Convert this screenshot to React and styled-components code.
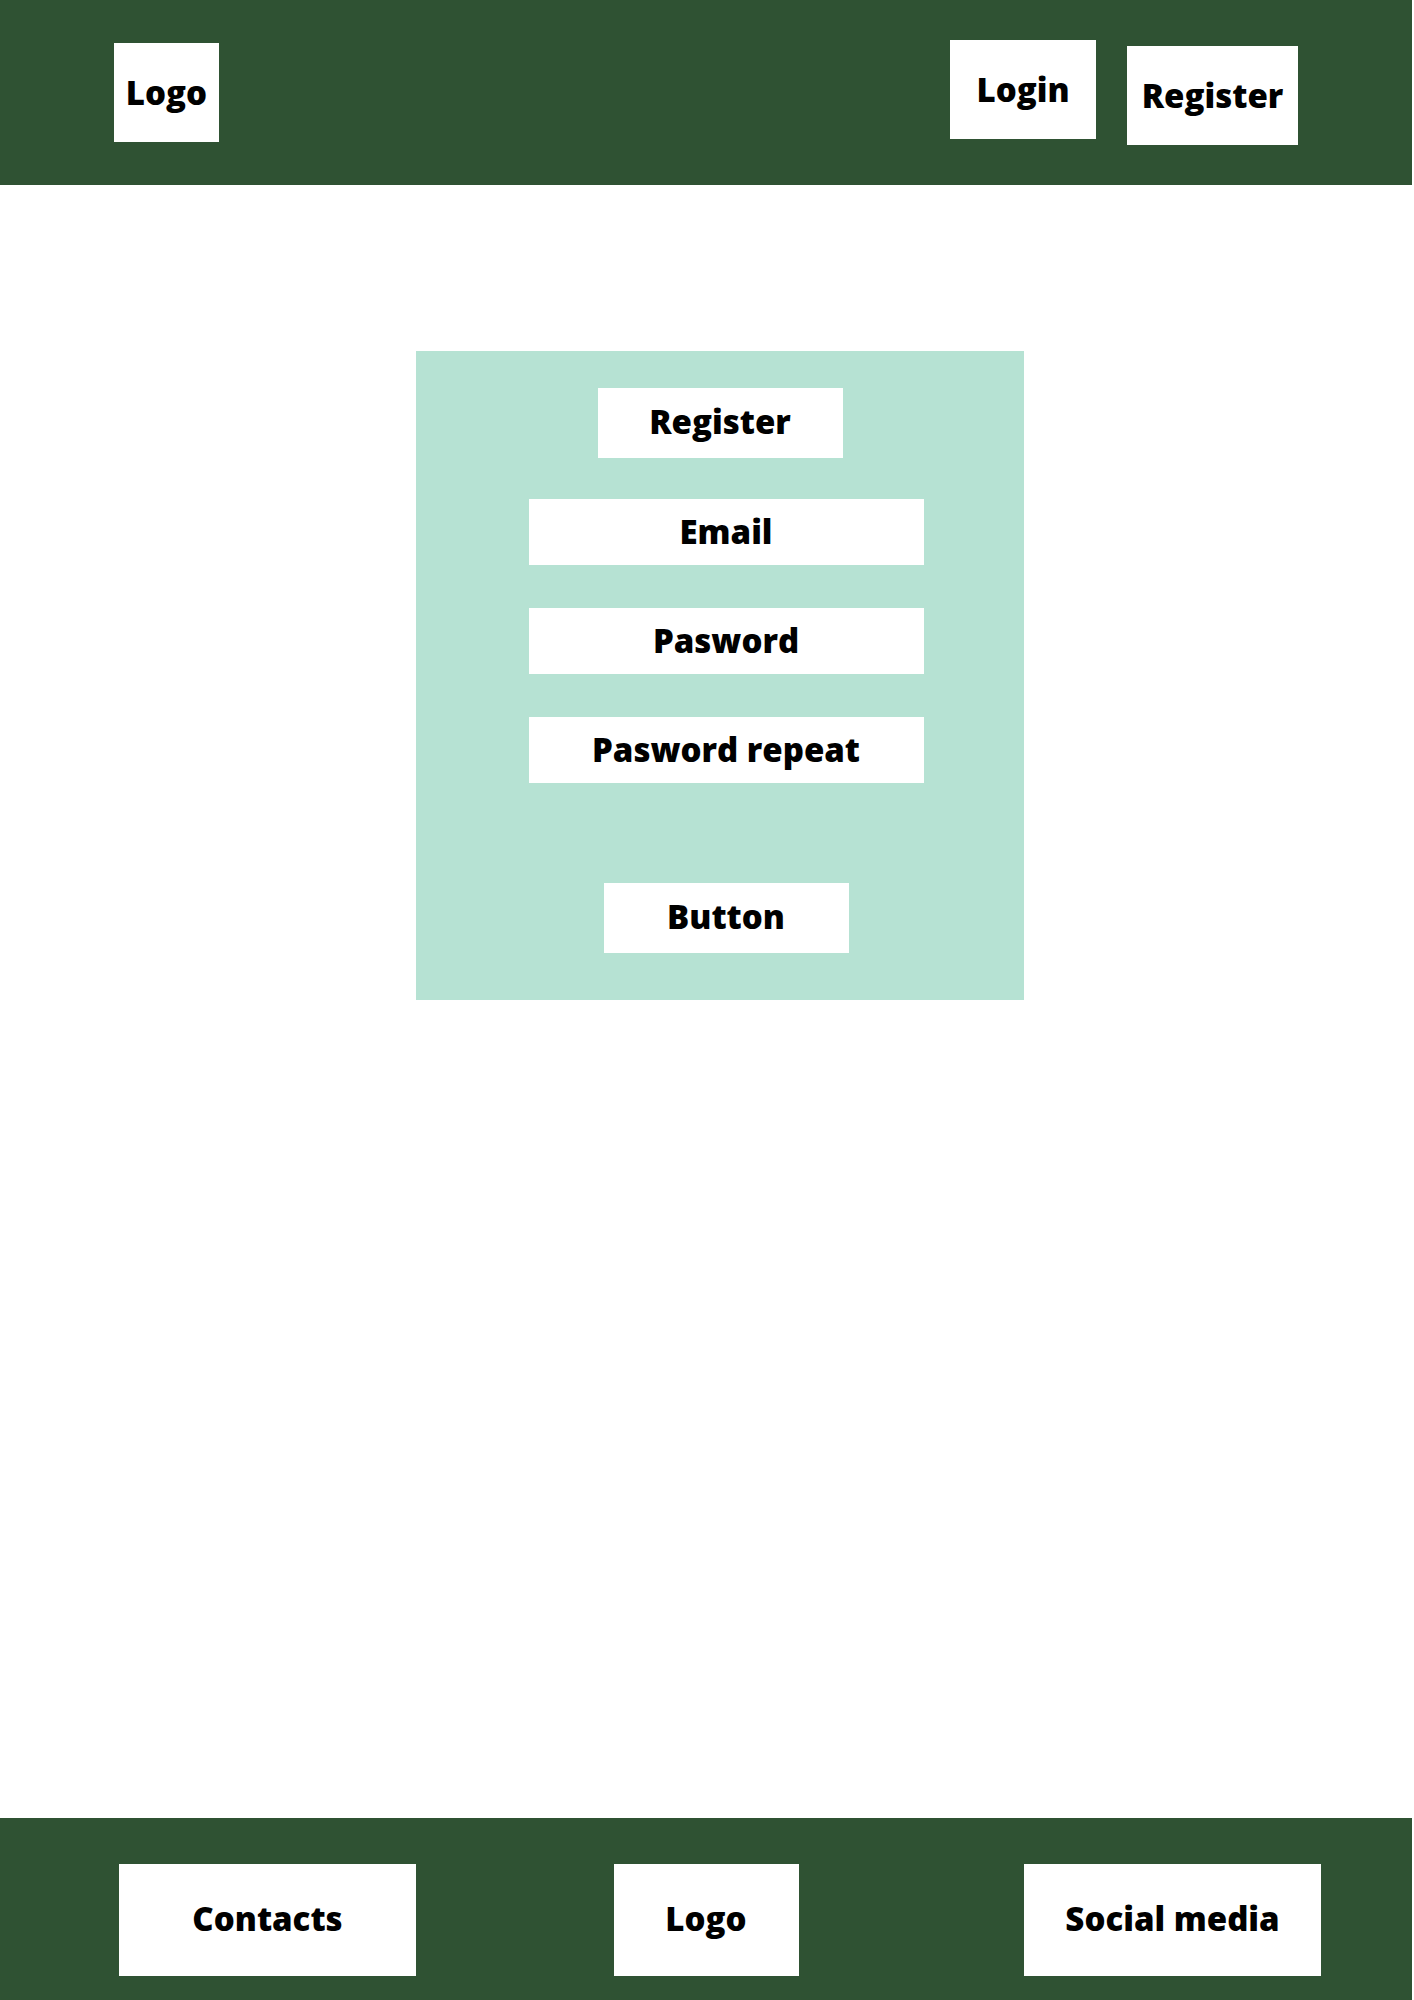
import React from "react";
import styled, { createGlobalStyle, css } from "styled-components";

const GlobalStyle = createGlobalStyle`
  *, *::before, *::after { box-sizing: border-box; }
  body {
    margin: 0;
    background: #ffffff;
    color: #000000;
    font-family: "Open Sans", "Noto Sans", sans-serif;
    font-size: 33px;
    font-weight: 800;
    line-height: 48px;
  }
`;

const block = css`
  display: flex;
  align-items: center;
  justify-content: center;
  margin: 0;
  border: 0;
  background: #ffffff;
  color: inherit;
  font: inherit;
  text-align: center;
  text-decoration: none;
  white-space: nowrap;
`;

const Page = styled.div`
  display: flex;
  flex-direction: column;
  min-height: 100vh;
  margin-right: 2px;
`;

const Header = styled.header`
  display: flex;
  align-items: center;
  justify-content: space-between;
  padding: 40px 114px;
  background: #2f5233;
`;

const HeaderLink = styled.a`
  ${block}
  width: ${({ $width }) => $width}px;
  height: 99px;
  align-self: ${({ $align }) => $align || "auto"};
`;

const Nav = styled.nav`
  display: flex;
  gap: 31px;
  min-height: 105px;
`;

const Main = styled.main`
  flex: 1;
  display: flex;
  align-items: flex-start;
  justify-content: center;
  padding: 166px 0 80px 28px;
`;

const Panel = styled.section`
  display: flex;
  flex-direction: column;
  align-items: center;
  gap: 41px;
  width: 608px;
  max-width: 100%;
  padding: 37px 0 47px;
  background: #b6e2d3;
`;

const Title = styled.h1`
  ${block}
  width: 245px;
  height: 70px;
  padding-bottom: 2px;
`;

const Form = styled.form`
  display: flex;
  flex-direction: column;
  align-items: center;
  gap: 43px;
  padding-left: 12px;
`;

const Field = styled.input`
  ${block}
  width: 395px;
  height: 66px;
  padding: 0 0 2px;

  &::placeholder {
    color: #000000;
    opacity: 1;
  }
`;

const Submit = styled.button`
  ${block}
  width: 245px;
  height: 70px;
  margin-top: 57px;
  padding: 0 0 2px;
  cursor: pointer;
`;

const Footer = styled.footer`
  display: grid;
  grid-template-columns: 1fr auto 1fr;
  padding: 46px 0 24px;
  background: #2f5233;
`;

const FooterLink = styled.a`
  ${block}
  width: ${({ $width }) => $width}px;
  height: 112px;
  padding-bottom: 2px;

  &:first-child {
    margin-left: 119px;
  }

  &:last-child {
    justify-self: end;
    margin-right: 91px;
  }
`;

const fields = [
  { name: "email", type: "email", label: "Email" },
  { name: "password", type: "password", label: "Pasword" },
  { name: "passwordRepeat", type: "password", label: "Pasword repeat" },
];

export default function App() {
  return (
    <Page>
      <GlobalStyle />
      <Header>
        <HeaderLink href="#home" $width={105}>Logo</HeaderLink>
        <Nav>
          <HeaderLink href="#login" $width={146} $align="flex-start">Login</HeaderLink>
          <HeaderLink href="#register" $width={171} $align="flex-end">Register</HeaderLink>
        </Nav>
      </Header>
      <Main>
        <Panel>
          <Title>Register</Title>
          <Form onSubmit={(event) => event.preventDefault()}>
            {fields.map(({ name, type, label }) => (
              <Field key={name} name={name} type={type} placeholder={label} aria-label={label} />
            ))}
            <Submit type="submit">Button</Submit>
          </Form>
        </Panel>
      </Main>
      <Footer>
        <FooterLink href="#contacts" $width={297}>Contacts</FooterLink>
        <FooterLink href="#home" $width={185}>Logo</FooterLink>
        <FooterLink href="#social" $width={297}>Social media</FooterLink>
      </Footer>
    </Page>
  );
}
